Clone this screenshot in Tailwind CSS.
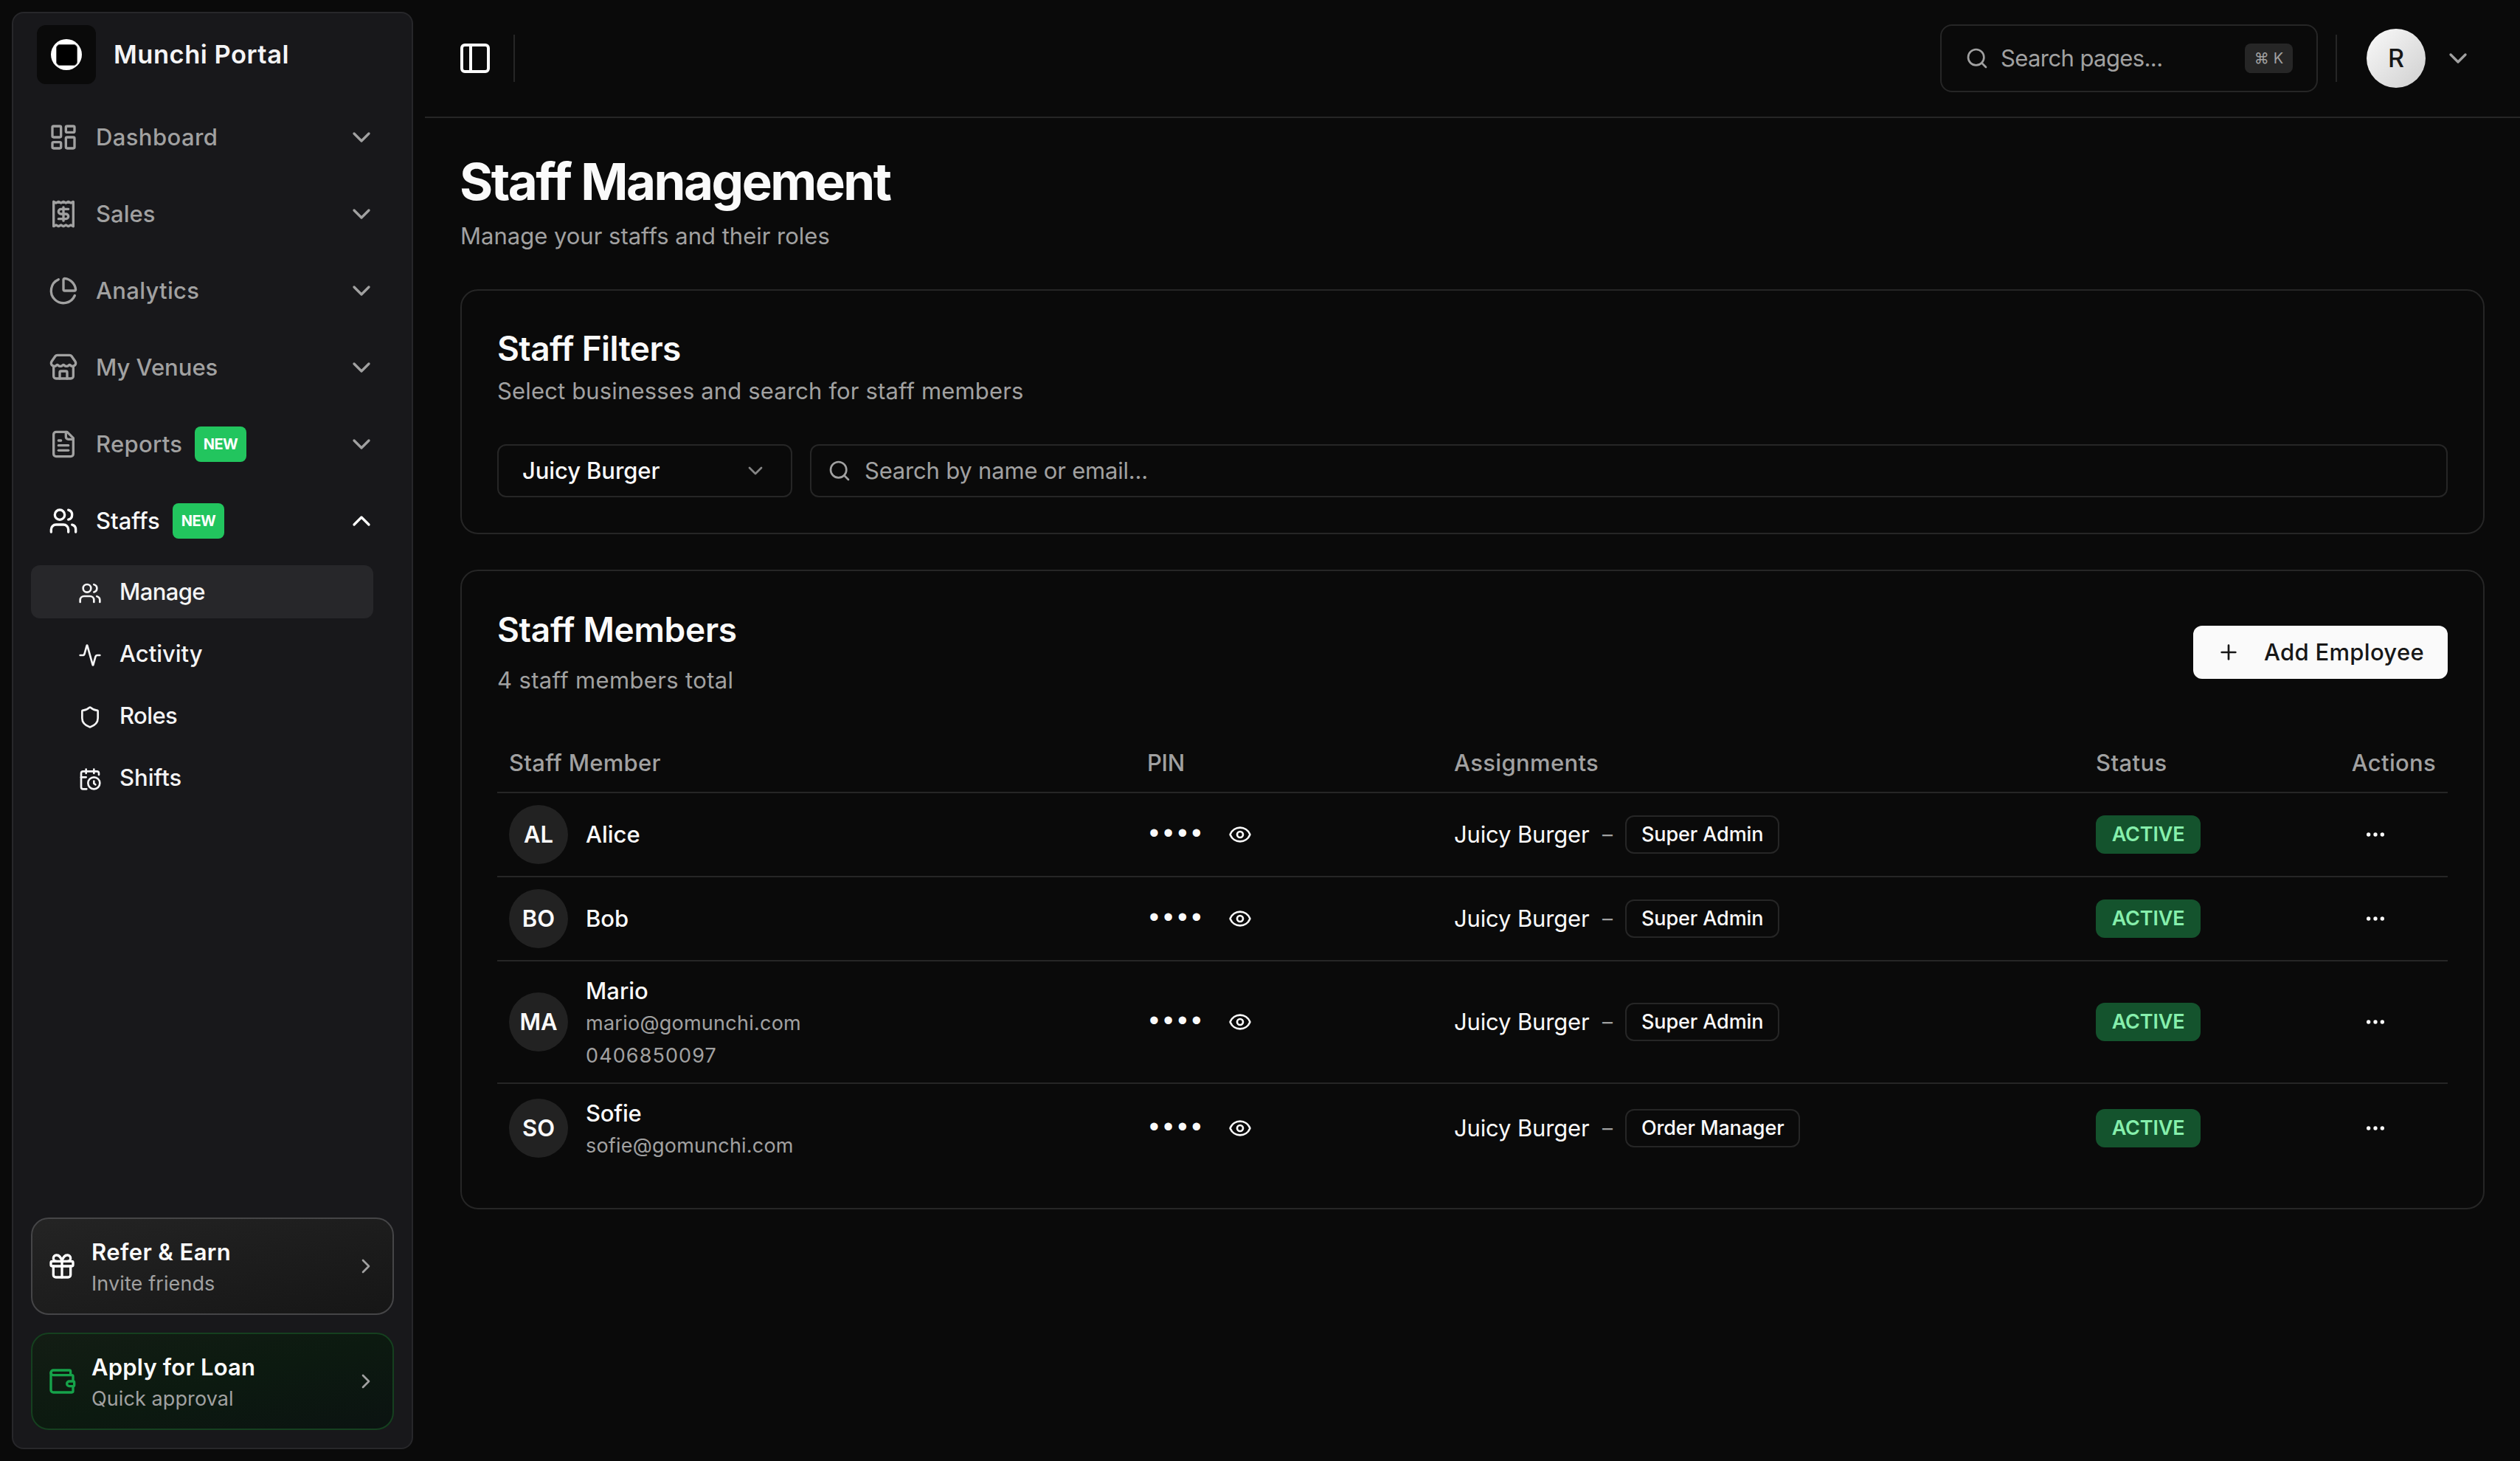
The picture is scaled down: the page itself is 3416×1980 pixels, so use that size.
<!DOCTYPE html>
<html lang="en">
<head>
<meta charset="utf-8">
<title>Munchi Portal – Staff Management</title>
<script src="https://cdn.jsdelivr.net/npm/@tailwindcss/browser@4"></script>
</head>
<body class="bg-[#0a0a0a] text-[#fafafa] font-['Inter',sans-serif] text-[31px] leading-[48px] w-[3416px] h-[1980px] overflow-hidden whitespace-nowrap">

<!-- Icon sprite -->
<svg class="hidden">
  <symbol id="dashboard" viewBox="0 0 24 24"><rect width="7" height="9" x="3" y="3" rx="1"/><rect width="7" height="5" x="14" y="3" rx="1"/><rect width="7" height="9" x="14" y="12" rx="1"/><rect width="7" height="5" x="3" y="16" rx="1"/></symbol>
  <symbol id="receipt" viewBox="0 0 24 24"><path d="M4 2v20l2-1 2 1 2-1 2 1 2-1 2 1 2-1 2 1V2l-2 1-2-1-2 1-2-1-2 1-2-1-2 1Z"/><path d="M16 8h-6a2 2 0 1 0 0 4h4a2 2 0 1 1 0 4H8"/><path d="M12 17.5v-11"/></symbol>
  <symbol id="pie" viewBox="0 0 24 24"><path d="M21 12c.552 0 1.005-.449.95-.998a10 10 0 0 0-8.953-8.951c-.55-.055-.998.398-.998.95v8a1 1 0 0 0 1 1z"/><path d="M21.21 15.89A10 10 0 1 1 8 2.83"/></symbol>
  <symbol id="store" viewBox="0 0 24 24"><path d="M15 21v-5a1 1 0 0 0-1-1h-4a1 1 0 0 0-1 1v5"/><path d="M17.774 10.31a1.12 1.12 0 0 0-1.549 0 2.5 2.5 0 0 1-3.451 0 1.12 1.12 0 0 0-1.548 0 2.5 2.5 0 0 1-3.452 0 1.12 1.12 0 0 0-1.549 0 2.5 2.5 0 0 1-3.77-3.248l2.889-4.184A2 2 0 0 1 7 2h10a2 2 0 0 1 1.653.873l2.895 4.192a2.5 2.5 0 0 1-3.774 3.244"/><path d="M4 10.95V19a2 2 0 0 0 2 2h12a2 2 0 0 0 2-2v-8.05"/></symbol>
  <symbol id="file" viewBox="0 0 24 24"><path d="M15 2H6a2 2 0 0 0-2 2v16a2 2 0 0 0 2 2h12a2 2 0 0 0 2-2V7Z"/><path d="M14 2v4a2 2 0 0 0 2 2h4"/><path d="M10 9H8"/><path d="M16 13H8"/><path d="M16 17H8"/></symbol>
  <symbol id="users" viewBox="0 0 24 24"><path d="M16 21v-2a4 4 0 0 0-4-4H6a4 4 0 0 0-4 4v2"/><circle cx="9" cy="7" r="4"/><path d="M22 21v-2a4 4 0 0 0-3-3.87"/><path d="M16 3.13a4 4 0 0 1 0 7.75"/></symbol>
  <symbol id="activity" viewBox="0 0 24 24"><path d="M22 12h-2.48a2 2 0 0 0-1.93 1.46l-2.35 8.36a.25.25 0 0 1-.48 0L9.24 2.18a.25.25 0 0 0-.48 0l-2.35 8.36A2 2 0 0 1 4.49 12H2"/></symbol>
  <symbol id="shield" viewBox="0 0 24 24"><path d="M20 13c0 5-3.5 7.5-7.66 8.95a1 1 0 0 1-.67-.01C7.5 20.5 4 18 4 13V6a1 1 0 0 1 1-1c2 0 4.5-1.2 6.24-2.72a1.17 1.17 0 0 1 1.52 0C14.51 3.81 17 5 19 5a1 1 0 0 1 1 1z"/></symbol>
  <symbol id="calendar" viewBox="0 0 24 24"><path d="M21 7.5V6a2 2 0 0 0-2-2H5a2 2 0 0 0-2 2v14a2 2 0 0 0 2 2h3.5"/><path d="M16 2v4"/><path d="M8 2v4"/><path d="M3 10h5"/><path d="M17.5 17.5 16 16.3V14"/><circle cx="16" cy="16" r="6"/></symbol>
  <symbol id="gift" viewBox="0 0 24 24"><rect x="3" y="8" width="18" height="4" rx="1"/><path d="M12 8v13"/><path d="M19 12v7a2 2 0 0 1-2 2H7a2 2 0 0 1-2-2v-7"/><path d="M7.5 8a2.5 2.5 0 0 1 0-5A4.8 8 0 0 1 12 8a4.8 8 0 0 1 4.5-5 2.5 2.5 0 0 1 0 5"/></symbol>
  <symbol id="wallet" viewBox="0 0 24 24"><path d="M19 7V4a1 1 0 0 0-1-1H5a2 2 0 0 0 0 4h15a1 1 0 0 1 1 1v4h-3a2 2 0 0 0 0 4h3a1 1 0 0 0 1-1v-2a1 1 0 0 0-1-1"/><path d="M3 5v14a2 2 0 0 0 2 2h15a1 1 0 0 0 1-1v-4"/></symbol>
  <symbol id="down" viewBox="0 0 24 24"><path d="m6 9 6 6 6-6"/></symbol>
  <symbol id="up" viewBox="0 0 24 24"><path d="m18 15-6-6-6 6"/></symbol>
  <symbol id="right" viewBox="0 0 24 24"><path d="m9 18 6-6-6-6"/></symbol>
  <symbol id="panel" viewBox="0 0 24 24"><rect width="18" height="18" x="3" y="3" rx="2"/><path d="M9 3v18"/></symbol>
  <symbol id="search" viewBox="0 0 24 24"><circle cx="11" cy="11" r="8"/><path d="m21 21-4.3-4.3"/></symbol>
  <symbol id="eye" viewBox="0 0 24 24"><path d="M2.062 12.348a1 1 0 0 1 0-.696 10.75 10.75 0 0 1 19.876 0 1 1 0 0 1 0 .696 10.75 10.75 0 0 1-19.876 0"/><circle cx="12" cy="12" r="3"/></symbol>
  <symbol id="dots" viewBox="0 0 24 24"><circle cx="12" cy="12" r="1"/><circle cx="19" cy="12" r="1"/><circle cx="5" cy="12" r="1"/></symbol>
  <symbol id="plus" viewBox="0 0 24 24"><path d="M5 12h14"/><path d="M12 5v14"/></symbol>
</svg>

<div class="flex w-full h-full [&_svg]:fill-none [&_svg]:stroke-current [&_svg]:stroke-2 [&_svg]:[stroke-linecap:round] [&_svg]:[stroke-linejoin:round] [&_svg]:shrink-0">

  <!-- Sidebar -->
  <div class="w-[576px] h-full p-4 shrink-0">
    <aside class="w-[544px] h-[1948px] rounded-2xl border-2 border-[#27272a] bg-[#18181b] flex flex-col px-6 pb-6 pt-4">
      <div class="flex items-center h-20 pl-2">
        <div class="size-20 rounded-xl bg-[#0a0a0a] flex items-center justify-center">
          <div class="size-[42px] rounded-full bg-white flex items-center justify-center">
            <div class="size-[29px] rounded-[5px] bg-black border border-[#555]"></div>
          </div>
        </div>
        <span class="ml-6 text-[34.5px] font-semibold tracking-[0.5px] text-[#f4f4f5]">Munchi Portal</span>
      </div>

      <nav class="mt-5 flex flex-col font-medium text-[#a1a1a1]">
        <div class="flex items-center h-[104px] pl-6 pr-6"><svg class="size-10"><use href="#dashboard"/></svg><span class="ml-6 tracking-[0.4px]">Dashboard</span><svg class="size-10 ml-auto"><use href="#down"/></svg></div>
        <div class="flex items-center h-[104px] pl-6 pr-6"><svg class="size-10"><use href="#receipt"/></svg><span class="ml-6">Sales</span><svg class="size-10 ml-auto"><use href="#down"/></svg></div>
        <div class="flex items-center h-[104px] pl-6 pr-6"><svg class="size-10"><use href="#pie"/></svg><span class="ml-6 tracking-[0.3px]">Analytics</span><svg class="size-10 ml-auto"><use href="#down"/></svg></div>
        <div class="flex items-center h-[104px] pl-6 pr-6"><svg class="size-10"><use href="#store"/></svg><span class="ml-6">My Venues</span><svg class="size-10 ml-auto"><use href="#down"/></svg></div>
        <div class="flex items-center h-[104px] pl-6 pr-6"><svg class="size-10"><use href="#file"/></svg><span class="ml-6 w-[134px] tracking-[0.3px]">Reports</span><span class="w-[70px] h-12 rounded-lg bg-[#22c55e] text-white text-[20px] font-bold tracking-[-0.6px] text-center">NEW</span><svg class="size-10 ml-auto"><use href="#down"/></svg></div>
        <div class="flex items-center h-[104px] pl-6 pr-6 text-[#fafafa]"><svg class="size-10"><use href="#users"/></svg><span class="ml-6 w-[104px]">Staffs</span><span class="w-[70px] h-12 rounded-lg bg-[#22c55e] text-white text-[20px] font-bold tracking-[-0.6px] text-center">NEW</span><svg class="size-10 ml-auto"><use href="#up"/></svg></div>
      </nav>

      <div class="mt-2 flex flex-col gap-3 w-[464px] font-medium text-[#f4f4f5]">
        <div class="flex items-center h-[72px] rounded-xl bg-[#27272a] pl-16"><svg class="size-8 mt-1"><use href="#users"/></svg><span class="ml-6 tracking-[-0.6px]">Manage</span></div>
        <div class="flex items-center h-[72px] pl-16"><svg class="size-8 mt-1"><use href="#activity"/></svg><span class="ml-6">Activity</span></div>
        <div class="flex items-center h-[72px] pl-16"><svg class="size-8 mt-1"><use href="#shield"/></svg><span class="ml-6 tracking-[-0.6px]">Roles</span></div>
        <div class="flex items-center h-[72px] pl-16"><svg class="size-8 mt-1"><use href="#calendar"/></svg><span class="ml-6">Shifts</span></div>
      </div>

      <div class="mt-auto flex flex-col gap-6">
        <div class="flex items-center h-[132px] rounded-3xl border-2 border-[#454547] bg-linear-to-br from-[#242424] to-[#161616] pl-5 pr-5">
          <svg class="size-10 text-white"><use href="#gift"/></svg>
          <div class="ml-5 pt-[3px] flex flex-col">
            <span class="font-semibold tracking-[0.4px] leading-[44px]">Refer &amp; Earn</span>
            <span class="text-[27px] leading-[42px] tracking-[0.1px] text-[#a1a1a1]">Invite friends</span>
          </div>
          <svg class="size-8 ml-auto text-[#a1a1a1]"><use href="#right"/></svg>
        </div>
        <div class="flex items-center h-[132px] rounded-3xl border-2 border-[#15401f] bg-linear-to-br from-[#131d14] via-[#0c1a10] to-[#0b1311] pl-5 pr-5">
          <svg class="size-10 text-[#16a34a]"><use href="#wallet"/></svg>
          <div class="ml-5 pt-[3px] flex flex-col">
            <span class="font-semibold tracking-[0.2px] leading-[44px]">Apply for Loan</span>
            <span class="text-[27px] leading-[42px] tracking-[0.1px] text-[#a1a1a1]">Quick approval</span>
          </div>
          <svg class="size-8 ml-auto text-[#a1a1a1]"><use href="#right"/></svg>
        </div>
      </div>
    </aside>
  </div>

  <div class="w-[2840px] flex flex-col">
    <!-- Top bar -->
    <header class="h-40 border-b-2 border-[#262626] flex items-center pl-11 pr-16">
      <svg class="size-12"><use href="#panel"/></svg>
      <div class="w-0.5 h-16 bg-[#262626] ml-7"></div>
      <div class="ml-auto w-[512px] h-[92px] rounded-2xl border-2 border-[#262626] flex items-center pl-8 pr-8 text-[#a1a1a1]">
        <svg class="size-8"><use href="#search"/></svg>
        <span class="ml-4 tracking-[-0.6px]">Search pages...</span>
        <span class="ml-auto w-[65px] h-10 rounded-lg bg-[#262626] text-[20px] leading-10 flex justify-center gap-[6px]"><span>⌘</span><span>K</span></span>
      </div>
      <div class="w-0.5 h-16 bg-[#262626] ml-6"></div>
      <div class="ml-10 size-20 rounded-full bg-linear-to-br from-[#fafafa] to-[#cfcfcf] text-[#171717] text-[34px] font-medium leading-20 text-center">R</div>
      <svg class="size-10 ml-6 text-[#a1a1a1]"><use href="#down"/></svg>
    </header>

    <main class="px-12 pt-12 flex flex-col">
      <h1 class="text-[69px] leading-[77px] font-bold tracking-[-2.5px] -ml-px">Staff Management</h1>
      <p class="mt-[11px] text-[#a1a1a1]">Manage your staffs and their roles</p>

      <!-- Filters -->
      <section class="mt-12 h-[332px] rounded-3xl border-2 border-[#262626] p-12 flex flex-col">
        <h2 class="text-[46px] leading-[60px] font-semibold tracking-[-0.6px]">Staff Filters</h2>
        <p class="mt-1 text-[#a1a1a1] tracking-[0.15px]">Select businesses and search for staff members</p>
        <div class="mt-12 flex gap-6">
          <div class="w-[400px] h-[72px] rounded-xl border-2 border-[#262626] flex items-center pl-8 pr-8 font-medium"><span class="tracking-[-0.1px]">Juicy Burger</span><svg class="size-8 ml-auto text-[#858585]"><use href="#down"/></svg></div>
          <div class="flex-1 h-[72px] rounded-xl border-2 border-[#262626] flex items-center pl-[22px] text-[#a1a1a1]"><svg class="size-8"><use href="#search"/></svg><span class="ml-[18px] tracking-[-0.2px]">Search by name or email...</span></div>
        </div>
      </section>

      <!-- Members -->
      <section class="mt-12 h-[867px] rounded-3xl border-2 border-[#262626] p-12 flex flex-col">
        <div class="flex items-center justify-between">
          <div>
            <h2 class="text-[46px] leading-[62px] font-semibold tracking-[-0.3px]">Staff Members</h2>
            <p class="mt-[14px] text-[#a1a1a1] tracking-[0.35px]">4 staff members total</p>
          </div>
          <button class="w-[345px] h-[72px] rounded-xl bg-[#fafafa] text-[#171717] font-medium flex items-center pl-8"><svg class="size-8"><use href="#plus"/></svg><span class="ml-8 tracking-[0.3px]">Add Employee</span></button>
        </div>

        <div class="mt-12 grid grid-cols-[865px_416px_870px_347px_146px] h-[81px] items-center border-b-2 border-[#262626] font-medium text-[#a1a1a1]">
          <span class="pl-4 tracking-[0.3px]">Staff Member</span><span class="pl-4 tracking-[-0.3px]">PIN</span><span class="pl-4 tracking-[0.35px]">Assignments</span><span class="pl-4 tracking-[0.4px]">Status</span><span class="text-right pr-4 tracking-[0.3px]">Actions</span>
        </div>

        <div class="grid grid-cols-[865px_416px_870px_347px_146px] h-[114px] items-center border-b-2 border-[#262626]">
          <div class="pl-4 flex items-center gap-6"><div class="size-20 rounded-full bg-[#222] leading-20 text-center font-semibold">AL</div><span class="font-medium">Alice</span></div>
          <div class="pl-4 flex items-center"><span class="w-[77px] font-['Liberation_Mono',monospace] text-[38px] tracking-[-3.6px] -ml-[2px] mr-[2px] pt-px">••••</span><svg class="size-8 ml-[33px]"><use href="#eye"/></svg></div>
          <div class="pl-4 flex items-center"><span class="w-[184px] tracking-[-0.15px]">Juicy Burger</span><span class="ml-4 w-4 text-[28px] text-[#a1a1a1] flex justify-center">–</span><span class="ml-4 h-[52px] rounded-xl border-2 border-[#262626] px-5 text-[27px] font-medium tracking-[-0.1px]">Super Admin</span></div>
          <div class="pl-4 flex"><span class="w-[142px] h-[52px] leading-[52px] rounded-xl bg-[#14532d] text-[#86efac] text-[27px] font-semibold text-center tracking-[-0.2px]">ACTIVE</span></div>
          <div class="pl-8"><svg class="size-8"><use href="#dots"/></svg></div>
        </div>

        <div class="grid grid-cols-[865px_416px_870px_347px_146px] h-[114px] items-center border-b-2 border-[#262626]">
          <div class="pl-4 flex items-center gap-6"><div class="size-20 rounded-full bg-[#222] leading-20 text-center font-semibold">BO</div><span class="font-medium">Bob</span></div>
          <div class="pl-4 flex items-center"><span class="w-[77px] font-['Liberation_Mono',monospace] text-[38px] tracking-[-3.6px] -ml-[2px] mr-[2px] pt-px">••••</span><svg class="size-8 ml-[33px]"><use href="#eye"/></svg></div>
          <div class="pl-4 flex items-center"><span class="w-[184px] tracking-[-0.15px]">Juicy Burger</span><span class="ml-4 w-4 text-[28px] text-[#a1a1a1] flex justify-center">–</span><span class="ml-4 h-[52px] rounded-xl border-2 border-[#262626] px-5 text-[27px] font-medium tracking-[-0.1px]">Super Admin</span></div>
          <div class="pl-4 flex"><span class="w-[142px] h-[52px] leading-[52px] rounded-xl bg-[#14532d] text-[#86efac] text-[27px] font-semibold text-center tracking-[-0.2px]">ACTIVE</span></div>
          <div class="pl-8"><svg class="size-8"><use href="#dots"/></svg></div>
        </div>

        <div class="grid grid-cols-[865px_416px_870px_347px_146px] h-[166px] items-center border-b-2 border-[#262626]">
          <div class="pl-4 flex items-center gap-6"><div class="size-20 rounded-full bg-[#222] leading-20 text-center font-semibold">MA</div>
            <div class="flex flex-col"><span class="font-medium">Mario</span><span class="text-[27px] leading-10 tracking-[0.25px] text-[#a1a1a1]">mario@gomunchi.com</span><span class="mt-1 text-[27px] leading-10 tracking-[1.1px] text-[#a1a1a1]">0406850097</span></div></div>
          <div class="pl-4 flex items-center"><span class="w-[77px] font-['Liberation_Mono',monospace] text-[38px] tracking-[-3.6px] -ml-[2px] mr-[2px] pt-px">••••</span><svg class="size-8 ml-[33px]"><use href="#eye"/></svg></div>
          <div class="pl-4 flex items-center"><span class="w-[184px] tracking-[-0.15px]">Juicy Burger</span><span class="ml-4 w-4 text-[28px] text-[#a1a1a1] flex justify-center">–</span><span class="ml-4 h-[52px] rounded-xl border-2 border-[#262626] px-5 text-[27px] font-medium tracking-[-0.1px]">Super Admin</span></div>
          <div class="pl-4 flex"><span class="w-[142px] h-[52px] leading-[52px] rounded-xl bg-[#14532d] text-[#86efac] text-[27px] font-semibold text-center tracking-[-0.2px]">ACTIVE</span></div>
          <div class="pl-8"><svg class="size-8"><use href="#dots"/></svg></div>
        </div>

        <div class="grid grid-cols-[865px_416px_870px_347px_146px] h-[120px] items-center">
          <div class="pl-4 flex items-center gap-6"><div class="size-20 rounded-full bg-[#222] leading-20 text-center font-semibold">SO</div>
            <div class="flex flex-col"><span class="font-medium tracking-[-0.2px]">Sofie</span><span class="text-[27px] leading-10 tracking-[0.2px] text-[#a1a1a1]">sofie@gomunchi.com</span></div></div>
          <div class="pl-4 flex items-center"><span class="w-[77px] font-['Liberation_Mono',monospace] text-[38px] tracking-[-3.6px] -ml-[2px] mr-[2px] pt-px">••••</span><svg class="size-8 ml-[33px]"><use href="#eye"/></svg></div>
          <div class="pl-4 flex items-center"><span class="w-[184px] tracking-[-0.15px]">Juicy Burger</span><span class="ml-4 w-4 text-[28px] text-[#a1a1a1] flex justify-center">–</span><span class="ml-4 h-[52px] rounded-xl border-2 border-[#262626] px-5 text-[27px] font-medium tracking-[-0.15px]">Order Manager</span></div>
          <div class="pl-4 flex"><span class="w-[142px] h-[52px] leading-[52px] rounded-xl bg-[#14532d] text-[#86efac] text-[27px] font-semibold text-center tracking-[-0.2px]">ACTIVE</span></div>
          <div class="pl-8"><svg class="size-8"><use href="#dots"/></svg></div>
        </div>
      </section>
    </main>
  </div>
</div>
</body>
</html>
